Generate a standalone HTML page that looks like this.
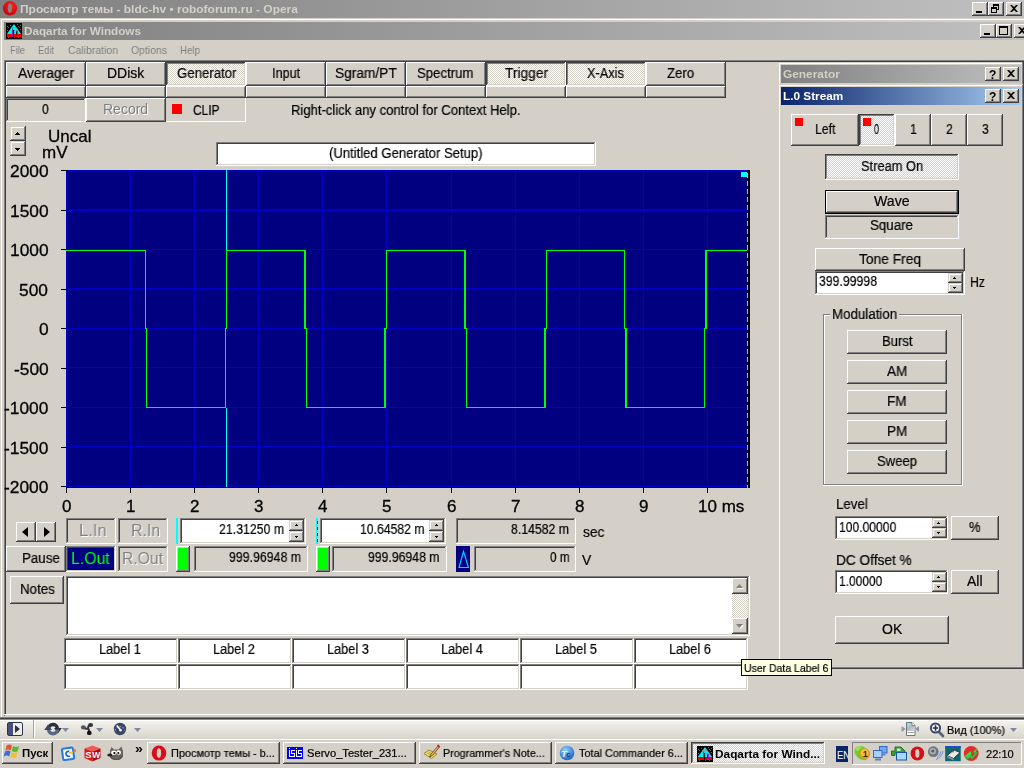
<!DOCTYPE html><html><head><meta charset="utf-8"><title>Daqarta</title><style>
html,body{margin:0;padding:0;}
body{width:1024px;height:768px;overflow:hidden;background:#d4d0c8;position:relative;font-family:"Liberation Sans",sans-serif;font-size:14px;color:#000;}
.a{position:absolute;box-sizing:border-box;white-space:nowrap;overflow:hidden;}
.v{overflow:visible;}
.btn{background:#d4d0c8;box-shadow:inset -1px -1px 0 #404040,inset 1px 1px 0 #fff,inset -2px -2px 0 #808080,inset 2px 2px 0 #d4d0c8;}
.sbtn{background:#d4d0c8;box-shadow:inset -1px -1px 0 #404040,inset 1px 1px 0 #d4d0c8,inset -2px -2px 0 #808080,inset 2px 2px 0 #fff;}
.sunk{background:#d4d0c8;box-shadow:inset -1px -1px 0 #fff,inset 1px 1px 0 #808080,inset -2px -2px 0 #d4d0c8,inset 2px 2px 0 #404040;}
.white{background:#fff;}
.g{will-change:transform;}
.dith{background:repeating-conic-gradient(#fff 0% 25%,#d4d0c8 0% 50%) 0 0/2px 2px;}
.pressed{box-shadow:inset -1px -1px 0 #fff,inset 1px 1px 0 #404040,inset -2px -2px 0 #d4d0c8,inset 2px 2px 0 #808080;}
</style></head><body>
<div class="a " style="left:0px;top:0px;width:1024px;height:18px;background:linear-gradient(90deg,#808080 0%,#c0c0c0 100%);"></div>
<svg class="a v" style="left:2px;top:0px" width="16" height="17" viewBox="0 0 16 17"><defs><radialGradient id="og" cx="0.6" cy="0.3" r="0.8"><stop offset="0" stop-color="#ff2020"/><stop offset="1" stop-color="#c00008"/></radialGradient></defs><ellipse cx="8" cy="8.300" rx="7" ry="7.300" fill="url(#og)"/><ellipse cx="7.900" cy="8.200" rx="2.100" ry="4.600" fill="#848484"/></svg>
<div class="a v g" style="left:20.00px;top:-1px;height:20px;line-height:20px;font-size:11px;color:#d4d0c8;font-weight:bold;transform:scaleX(1.0859);transform-origin:0 0;">Просмотр темы - bldc-hv • roboforum.ru - Opera</div>
<div class="a btn" style="left:972px;top:2px;width:16px;height:14px;"></div>
<div class="a " style="left:976px;top:11px;width:6px;height:2px;background:#000"></div>
<div class="a btn" style="left:988px;top:2px;width:16px;height:14px;"></div>
<div class="a " style="left:993px;top:4px;width:6px;height:6px;border:1px solid #000;border-top:2px solid #000"></div>
<div class="a " style="left:991px;top:7px;width:6px;height:6px;border:1px solid #000;border-top:2px solid #000;background:#d4d0c8"></div>
<div class="a btn" style="left:1006px;top:2px;width:16px;height:14px;"></div>
<svg class="a v" style="left:1010px;top:5px" width="8" height="7" viewBox="0 0 8 7"><path d="M0 0h2l2 2 2-2h2L5 3.5 8 7H6L4 5 2 7H0l3-3.5z" fill="#000"/></svg>
<div class="a " style="left:0px;top:18px;width:1024px;height:701px;background:#d4d0c8"></div>
<div class="a " style="left:1px;top:19px;width:1023px;height:1px;background:#fff"></div>
<div class="a " style="left:1px;top:19px;width:1px;height:698px;background:#fff"></div>
<div class="a " style="left:4px;top:22px;width:1020px;height:18px;background:linear-gradient(90deg,#808080 0%,#c0c0c0 100%);"></div>
<svg class="a v" style="left:6px;top:23px" width="16" height="16" viewBox="0 0 16 16"><rect width="16" height="16" fill="#000"/><path d="M7.900 1L0.800 11h14.400z" fill="#00f0f0"/><rect x="1" y="11" width="14" height="3" fill="#f00000"/><rect x="5" y="4" width="5.500" height="0.700" fill="#a08888"/><rect x="8.500" y="7" width="4" height="0.700" fill="#a08888"/><rect x="6.200" y="5.500" width="1" height="8.500" fill="#9000c0"/><rect x="7.200" y="7" width="0.900" height="7" fill="#100010"/><rect x="11" y="8" width="0.900" height="6" fill="#c000e0"/><rect x="10.100" y="8.500" width="0.900" height="3" fill="#101010"/><rect x="10" y="7.700" width="0.800" height="1.200" fill="#f00000"/><g fill="#686868"><rect x="1" y="3" width="1" height="1"/><rect x="2" y="4" width="1" height="1"/><rect x="4" y="2" width="1" height="1"/><rect x="11" y="1" width="1" height="1"/><rect x="12" y="3" width="1" height="1"/><rect x="13" y="4" width="1" height="1"/><rect x="14" y="2" width="1" height="1"/><rect x="14" y="6" width="1" height="1"/><rect x="1" y="7" width="1" height="1"/></g><g fill="#008080"><rect x="2" y="14" width="1" height="1"/><rect x="8" y="14" width="1" height="1"/><rect x="12" y="14" width="1" height="1"/></g></svg>
<div class="a v g" style="left:24.00px;top:21px;height:20px;line-height:20px;font-size:11px;color:#d4d0c8;font-weight:bold;transform:scaleX(1.0642);transform-origin:0 0;">Daqarta for Windows</div>
<div class="a btn" style="left:980px;top:24px;width:16px;height:14px;"></div>
<div class="a " style="left:984px;top:33px;width:6px;height:2px;background:#000"></div>
<div class="a btn" style="left:996px;top:24px;width:16px;height:14px;"></div>
<div class="a " style="left:999px;top:26px;width:9px;height:9px;border:1px solid #000;border-top:2px solid #000"></div>
<div class="a btn" style="left:1014px;top:24px;width:16px;height:14px;"></div>
<svg class="a v" style="left:1018px;top:27px" width="8" height="7" viewBox="0 0 8 7"><path d="M0 0h2l2 2 2-2h2L5 3.5 8 7H6L4 5 2 7H0l3-3.5z" fill="#000"/></svg>
<div class="a v g" style="left:10.00px;top:40px;height:20px;line-height:20px;font-size:11px;color:#808080;transform:scaleX(0.8451);transform-origin:0 0;">File</div>
<div class="a v g" style="left:38.00px;top:40px;height:20px;line-height:20px;font-size:11px;color:#808080;transform:scaleX(0.8449);transform-origin:0 0;">Edit</div>
<div class="a v g" style="left:68.00px;top:40px;height:20px;line-height:20px;font-size:11px;color:#808080;transform:scaleX(0.9512);transform-origin:0 0;">Calibration</div>
<div class="a v g" style="left:131.00px;top:40px;height:20px;line-height:20px;font-size:11px;color:#808080;transform:scaleX(0.9489);transform-origin:0 0;">Options</div>
<div class="a v g" style="left:180.00px;top:40px;height:20px;line-height:20px;font-size:11px;color:#808080;transform:scaleX(0.8840);transform-origin:0 0;">Help</div>
<div class="a " style="left:4px;top:60px;width:1020px;height:1px;background:#808080"></div>
<div class="a " style="left:5px;top:61px;width:1019px;height:1px;background:#404040"></div>
<div class="a " style="left:4px;top:60px;width:1px;height:656px;background:#808080"></div>
<div class="a " style="left:5px;top:61px;width:1px;height:654px;background:#404040"></div>
<div class="a btn" style="left:6px;top:62px;width:80px;height:24px;"></div>
<div class="a v g" style="left:18.00px;top:63px;height:20px;line-height:20px;font-size:14px;color:#000;transform:scaleX(0.9901);transform-origin:0 0;-webkit-text-stroke:0.2px #000;">Averager</div>
<div class="a btn" style="left:6px;top:86px;width:80px;height:12px;"></div>
<div class="a btn" style="left:86px;top:62px;width:80px;height:24px;"></div>
<div class="a v g" style="left:107.00px;top:63px;height:20px;line-height:20px;font-size:14px;color:#000;transform:scaleX(0.9900);transform-origin:0 0;-webkit-text-stroke:0.2px #000;">DDisk</div>
<div class="a btn" style="left:86px;top:86px;width:80px;height:12px;"></div>
<div class="a pressed dith" style="left:166px;top:62px;width:80px;height:24px;"></div>
<div class="a v g" style="left:176.50px;top:63px;height:20px;line-height:20px;font-size:14px;color:#000;transform:scaleX(0.9435);transform-origin:0 0;-webkit-text-stroke:0.2px #000;">Generator</div>
<div class="a btn" style="left:166px;top:86px;width:80px;height:12px;"></div>
<div class="a btn" style="left:246px;top:62px;width:80px;height:24px;"></div>
<div class="a v g" style="left:272.30px;top:63px;height:20px;line-height:20px;font-size:14px;color:#000;transform:scaleX(0.9028);transform-origin:0 0;-webkit-text-stroke:0.2px #000;">Input</div>
<div class="a btn" style="left:246px;top:86px;width:80px;height:12px;"></div>
<div class="a btn" style="left:326px;top:62px;width:80px;height:24px;"></div>
<div class="a v g" style="left:335.20px;top:63px;height:20px;line-height:20px;font-size:14px;color:#000;transform:scaleX(0.9810);transform-origin:0 0;-webkit-text-stroke:0.2px #000;">Sgram/PT</div>
<div class="a btn" style="left:326px;top:86px;width:80px;height:12px;"></div>
<div class="a btn" style="left:406px;top:62px;width:80px;height:24px;"></div>
<div class="a v g" style="left:417.20px;top:63px;height:20px;line-height:20px;font-size:14px;color:#000;transform:scaleX(0.9410);transform-origin:0 0;-webkit-text-stroke:0.2px #000;">Spectrum</div>
<div class="a btn" style="left:406px;top:86px;width:80px;height:12px;"></div>
<div class="a pressed dith" style="left:486px;top:62px;width:80px;height:24px;"></div>
<div class="a v g" style="left:505.00px;top:63px;height:20px;line-height:20px;font-size:14px;color:#000;transform:scaleX(0.9815);transform-origin:0 0;-webkit-text-stroke:0.2px #000;">Trigger</div>
<div class="a btn" style="left:486px;top:86px;width:80px;height:12px;"></div>
<div class="a pressed dith" style="left:566px;top:62px;width:80px;height:24px;"></div>
<div class="a v g" style="left:586.60px;top:63px;height:20px;line-height:20px;font-size:14px;color:#000;transform:scaleX(0.9125);transform-origin:0 0;-webkit-text-stroke:0.2px #000;">X-Axis</div>
<div class="a btn" style="left:566px;top:86px;width:80px;height:12px;"></div>
<div class="a btn" style="left:646px;top:62px;width:80px;height:24px;"></div>
<div class="a v g" style="left:667.40px;top:63px;height:20px;line-height:20px;font-size:14px;color:#000;transform:scaleX(0.9440);transform-origin:0 0;-webkit-text-stroke:0.2px #000;">Zero</div>
<div class="a btn" style="left:646px;top:86px;width:80px;height:12px;"></div>
<div class="a sunk" style="left:6px;top:98px;width:80px;height:24px;"></div>
<div class="a v g" style="left:42.06px;top:99px;height:20px;line-height:20px;font-size:14px;color:#000;transform:scaleX(0.8800);transform-origin:0 0;-webkit-text-stroke:0.2px #000;">0</div>
<div class="a btn" style="left:86px;top:98px;width:80px;height:24px;"></div>
<div class="a v g" style="left:103.44px;top:99px;height:20px;line-height:20px;font-size:14px;color:#808080;text-shadow:1px 1px 0 #fff;">Record</div>
<div class="a " style="left:166px;top:98px;width:80px;height:24px;box-shadow:inset -1px -1px 0 #fff;"></div>
<div class="a " style="left:172px;top:104px;width:10px;height:10px;background:#ff0000"></div>
<div class="a v g" style="left:192.50px;top:100px;height:20px;line-height:20px;font-size:14px;color:#000;transform:scaleX(0.8514);transform-origin:0 0;-webkit-text-stroke:0.2px #000;">CLIP</div>
<div class="a v g" style="left:291.00px;top:100px;height:20px;line-height:20px;font-size:14px;color:#000;transform:scaleX(0.9334);transform-origin:0 0;-webkit-text-stroke:0.2px #000;">Right-click any control for Context Help.</div>
<div class="a sbtn" style="left:10px;top:126px;width:16px;height:15px;"></div>
<div class="a sbtn" style="left:10px;top:141px;width:16px;height:15px;"></div>
<div class="a " style="left:17px;top:132px;width:1px;height:1px;background:#000"></div>
<div class="a " style="left:16px;top:133px;width:3px;height:1px;background:#000"></div>
<div class="a " style="left:15px;top:134px;width:5px;height:1px;background:#000"></div>
<div class="a " style="left:15px;top:148px;width:5px;height:1px;background:#000"></div>
<div class="a " style="left:16px;top:149px;width:3px;height:1px;background:#000"></div>
<div class="a " style="left:17px;top:150px;width:1px;height:1px;background:#000"></div>
<div class="a v g" style="left:47.50px;top:127px;height:20px;line-height:20px;font-size:17px;color:#000;-webkit-text-stroke:0.3px #000;">Uncal</div>
<div class="a v g" style="left:41.70px;top:143px;height:20px;line-height:20px;font-size:17px;color:#000;transform:scaleX(0.9922);transform-origin:0 0;-webkit-text-stroke:0.3px #000;">mV</div>
<div class="a sunk white" style="left:216px;top:142px;width:380px;height:24px;"></div>
<div class="a v g" style="left:329.00px;top:143px;height:20px;line-height:20px;font-size:14px;color:#000;transform:scaleX(0.9349);transform-origin:0 0;-webkit-text-stroke:0.2px #000;">(Untitled Generator Setup)</div>
<svg class="a" style="left:66px;top:170px" width="684" height="318" viewBox="0 0 684 318" shape-rendering="crispEdges"><rect width="684" height="318" fill="#000080"/><rect x="0" y="0" width="684" height="1" fill="#0000c8"/><rect x="0" y="0" width="1" height="318" fill="#0000c8"/><rect x="0" y="316" width="684" height="1" fill="#0000c8"/><rect x="64" y="0" width="1" height="317" fill="#0000c8"/><rect x="128" y="0" width="1" height="317" fill="#0000c8"/><rect x="192" y="0" width="1" height="317" fill="#0000c8"/><rect x="256" y="0" width="1" height="317" fill="#0000c8"/><rect x="320" y="0" width="1" height="317" fill="#0000c8"/><rect x="385" y="0" width="1" height="317" fill="#0000c8"/><rect x="449" y="0" width="1" height="317" fill="#0000c8"/><rect x="513" y="0" width="1" height="317" fill="#0000c8"/><rect x="577" y="0" width="1" height="317" fill="#0000c8"/><rect x="641" y="0" width="1" height="317" fill="#0000c8"/><rect x="3" y="39" width="681" height="2" fill="#0000c8"/><rect x="3" y="79" width="681" height="1" fill="#0000c8"/><rect x="3" y="118" width="681" height="2" fill="#0000c8"/><rect x="3" y="158" width="681" height="1" fill="#0000c8"/><rect x="3" y="197" width="681" height="1" fill="#0000c8"/><rect x="3" y="237" width="681" height="1" fill="#0000c8"/><rect x="3" y="276" width="681" height="1" fill="#0000c8"/><rect x="0" y="80" width="80" height="1" fill="#00ff00"/><rect x="79" y="80" width="1" height="79" fill="#00ff00"/><rect x="80" y="158" width="1" height="80" fill="#00ff00"/><rect x="80" y="237" width="80" height="1" fill="#00ff00"/><rect x="159" y="158" width="1" height="80" fill="#00ff00"/><rect x="160" y="80" width="1" height="79" fill="#00ff00"/><rect x="160" y="80" width="80" height="1" fill="#00ff00"/><rect x="238" y="80" width="2" height="79" fill="#00ff00"/><rect x="240" y="158" width="1" height="80" fill="#00ff00"/><rect x="240" y="237" width="80" height="1" fill="#00ff00"/><rect x="318" y="158" width="2" height="80" fill="#00ff00"/><rect x="320" y="80" width="1" height="79" fill="#00ff00"/><rect x="320" y="80" width="80" height="1" fill="#00ff00"/><rect x="398" y="80" width="2" height="79" fill="#00ff00"/><rect x="400" y="158" width="1" height="80" fill="#00ff00"/><rect x="400" y="237" width="80" height="1" fill="#00ff00"/><rect x="478" y="158" width="2" height="80" fill="#00ff00"/><rect x="480" y="80" width="1" height="79" fill="#00ff00"/><rect x="480" y="80" width="79" height="1" fill="#00ff00"/><rect x="558" y="80" width="1" height="79" fill="#00ff00"/><rect x="559" y="158" width="2" height="80" fill="#00ff00"/><rect x="559" y="237" width="80" height="1" fill="#00ff00"/><rect x="638" y="158" width="1" height="80" fill="#00ff00"/><rect x="639" y="80" width="2" height="79" fill="#00ff00"/><rect x="639" y="80" width="42" height="1" fill="#00ff00"/><rect x="160" y="0" width="1" height="80" fill="#00ffff"/><rect x="160" y="238" width="1" height="79" fill="#00ffff"/><rect x="681" y="0" width="3" height="318" fill="#000"/><rect x="0" y="317" width="684" height="1" fill="#000"/><rect x="681" y="3" width="1" height="5" fill="#00ffff"/><rect x="681" y="11" width="1" height="5" fill="#00ffff"/><rect x="681" y="19" width="1" height="5" fill="#00ffff"/><rect x="681" y="27" width="1" height="5" fill="#00ffff"/><rect x="681" y="35" width="1" height="5" fill="#00ffff"/><rect x="681" y="43" width="1" height="5" fill="#00ffff"/><rect x="681" y="51" width="1" height="5" fill="#00ffff"/><rect x="681" y="59" width="1" height="5" fill="#00ffff"/><rect x="681" y="67" width="1" height="5" fill="#00ffff"/><rect x="681" y="75" width="1" height="5" fill="#00ffff"/><rect x="681" y="83" width="1" height="5" fill="#00ffff"/><rect x="681" y="91" width="1" height="5" fill="#00ffff"/><rect x="681" y="99" width="1" height="5" fill="#00ffff"/><rect x="681" y="107" width="1" height="5" fill="#00ffff"/><rect x="681" y="115" width="1" height="5" fill="#00ffff"/><rect x="681" y="123" width="1" height="5" fill="#00ffff"/><rect x="681" y="131" width="1" height="5" fill="#00ffff"/><rect x="681" y="139" width="1" height="5" fill="#00ffff"/><rect x="681" y="147" width="1" height="5" fill="#00ffff"/><rect x="681" y="155" width="1" height="5" fill="#00ffff"/><rect x="681" y="163" width="1" height="5" fill="#00ffff"/><rect x="681" y="171" width="1" height="5" fill="#00ffff"/><rect x="681" y="179" width="1" height="5" fill="#00ffff"/><rect x="681" y="187" width="1" height="5" fill="#00ffff"/><rect x="681" y="195" width="1" height="5" fill="#00ffff"/><rect x="681" y="203" width="1" height="5" fill="#00ffff"/><rect x="681" y="211" width="1" height="5" fill="#00ffff"/><rect x="681" y="219" width="1" height="5" fill="#00ffff"/><rect x="681" y="227" width="1" height="5" fill="#00ffff"/><rect x="681" y="235" width="1" height="5" fill="#00ffff"/><rect x="681" y="243" width="1" height="5" fill="#00ffff"/><rect x="681" y="251" width="1" height="5" fill="#00ffff"/><rect x="681" y="259" width="1" height="5" fill="#00ffff"/><rect x="681" y="267" width="1" height="5" fill="#00ffff"/><rect x="681" y="275" width="1" height="5" fill="#00ffff"/><rect x="681" y="283" width="1" height="5" fill="#00ffff"/><rect x="681" y="291" width="1" height="5" fill="#00ffff"/><rect x="681" y="299" width="1" height="5" fill="#00ffff"/><rect x="681" y="307" width="1" height="5" fill="#00ffff"/><rect x="681" y="315" width="1" height="5" fill="#00ffff"/><rect x="675" y="2" width="6" height="5" fill="#00ffff"/></svg>
<div class="a v g" style="left:9.73px;top:162px;height:20px;line-height:20px;font-size:17px;color:#000;transform:scaleX(1.0200);transform-origin:0 0;-webkit-text-stroke:0.3px #000;">2000</div>
<div class="a " style="left:61px;top:170px;width:5px;height:1px;background:#000"></div>
<div class="a v g" style="left:9.73px;top:202px;height:20px;line-height:20px;font-size:17px;color:#000;transform:scaleX(1.0200);transform-origin:0 0;-webkit-text-stroke:0.3px #000;">1500</div>
<div class="a " style="left:61px;top:210px;width:5px;height:1px;background:#000"></div>
<div class="a v g" style="left:9.73px;top:241px;height:20px;line-height:20px;font-size:17px;color:#000;transform:scaleX(1.0200);transform-origin:0 0;-webkit-text-stroke:0.3px #000;">1000</div>
<div class="a " style="left:61px;top:249px;width:5px;height:1px;background:#000"></div>
<div class="a v g" style="left:19.36px;top:281px;height:20px;line-height:20px;font-size:17px;color:#000;transform:scaleX(1.0200);transform-origin:0 0;-webkit-text-stroke:0.3px #000;">500</div>
<div class="a " style="left:61px;top:289px;width:5px;height:1px;background:#000"></div>
<div class="a v g" style="left:38.67px;top:320px;height:20px;line-height:20px;font-size:17px;color:#000;transform:scaleX(1.0200);transform-origin:0 0;-webkit-text-stroke:0.3px #000;">0</div>
<div class="a " style="left:61px;top:328px;width:5px;height:1px;background:#000"></div>
<div class="a v g" style="left:13.62px;top:360px;height:20px;line-height:20px;font-size:17px;color:#000;transform:scaleX(1.0200);transform-origin:0 0;-webkit-text-stroke:0.3px #000;">-500</div>
<div class="a " style="left:61px;top:368px;width:5px;height:1px;background:#000"></div>
<div class="a v g" style="left:3.93px;top:399px;height:20px;line-height:20px;font-size:17px;color:#000;transform:scaleX(1.0200);transform-origin:0 0;-webkit-text-stroke:0.3px #000;">-1000</div>
<div class="a " style="left:61px;top:407px;width:5px;height:1px;background:#000"></div>
<div class="a v g" style="left:3.93px;top:439px;height:20px;line-height:20px;font-size:17px;color:#000;transform:scaleX(1.0200);transform-origin:0 0;-webkit-text-stroke:0.3px #000;">-1500</div>
<div class="a " style="left:61px;top:447px;width:5px;height:1px;background:#000"></div>
<div class="a v g" style="left:3.93px;top:478px;height:20px;line-height:20px;font-size:17px;color:#000;transform:scaleX(1.0200);transform-origin:0 0;-webkit-text-stroke:0.3px #000;">-2000</div>
<div class="a " style="left:61px;top:486px;width:5px;height:1px;background:#000"></div>
<div class="a " style="left:66px;top:170px;width:2px;height:1px;background:#000"></div>
<div class="a " style="left:66px;top:487px;width:1px;height:6px;background:#000"></div>
<div class="a v g" style="left:61.58px;top:497px;height:20px;line-height:20px;font-size:17px;color:#000;-webkit-text-stroke:0.3px #000;">0</div>
<div class="a " style="left:130px;top:487px;width:1px;height:6px;background:#000"></div>
<div class="a v g" style="left:125.58px;top:497px;height:20px;line-height:20px;font-size:17px;color:#000;-webkit-text-stroke:0.3px #000;">1</div>
<div class="a " style="left:194px;top:487px;width:1px;height:6px;background:#000"></div>
<div class="a v g" style="left:189.58px;top:497px;height:20px;line-height:20px;font-size:17px;color:#000;-webkit-text-stroke:0.3px #000;">2</div>
<div class="a " style="left:258px;top:487px;width:1px;height:6px;background:#000"></div>
<div class="a v g" style="left:253.58px;top:497px;height:20px;line-height:20px;font-size:17px;color:#000;-webkit-text-stroke:0.3px #000;">3</div>
<div class="a " style="left:322px;top:487px;width:1px;height:6px;background:#000"></div>
<div class="a v g" style="left:317.58px;top:497px;height:20px;line-height:20px;font-size:17px;color:#000;-webkit-text-stroke:0.3px #000;">4</div>
<div class="a " style="left:386px;top:487px;width:1px;height:6px;background:#000"></div>
<div class="a v g" style="left:381.58px;top:497px;height:20px;line-height:20px;font-size:17px;color:#000;-webkit-text-stroke:0.3px #000;">5</div>
<div class="a " style="left:451px;top:487px;width:1px;height:6px;background:#000"></div>
<div class="a v g" style="left:446.58px;top:497px;height:20px;line-height:20px;font-size:17px;color:#000;-webkit-text-stroke:0.3px #000;">6</div>
<div class="a " style="left:515px;top:487px;width:1px;height:6px;background:#000"></div>
<div class="a v g" style="left:510.58px;top:497px;height:20px;line-height:20px;font-size:17px;color:#000;-webkit-text-stroke:0.3px #000;">7</div>
<div class="a " style="left:579px;top:487px;width:1px;height:6px;background:#000"></div>
<div class="a v g" style="left:574.58px;top:497px;height:20px;line-height:20px;font-size:17px;color:#000;-webkit-text-stroke:0.3px #000;">8</div>
<div class="a " style="left:643px;top:487px;width:1px;height:6px;background:#000"></div>
<div class="a v g" style="left:638.58px;top:497px;height:20px;line-height:20px;font-size:17px;color:#000;-webkit-text-stroke:0.3px #000;">9</div>
<div class="a " style="left:707px;top:487px;width:1px;height:6px;background:#000"></div>
<div class="a v g" style="left:697.50px;top:497px;height:20px;line-height:20px;font-size:17px;color:#000;-webkit-text-stroke:0.3px #000;">10 ms</div>
<div class="a btn" style="left:16px;top:522px;width:20px;height:20px;"></div>
<div class="a btn" style="left:36px;top:522px;width:20px;height:20px;"></div>
<svg class="a v" style="left:22px;top:527px" width="6" height="10" viewBox="0 0 6 10"><path d="M6 0v10L0 5z" fill="#000"/></svg>
<svg class="a v" style="left:44px;top:527px" width="6" height="10" viewBox="0 0 6 10"><path d="M0 0v10L6 5z" fill="#000"/></svg>
<div class="a sunk" style="left:66px;top:518px;width:50px;height:26px;"></div>
<div class="a v g" style="left:79.40px;top:521px;height:20px;line-height:20px;font-size:17px;color:#808080;transform:scaleX(0.9727);transform-origin:0 0;text-shadow:1px 1px 0 #fff;">L.In</div>
<div class="a sunk" style="left:118px;top:518px;width:50px;height:26px;"></div>
<div class="a v g" style="left:130.60px;top:521px;height:20px;line-height:20px;font-size:17px;color:#808080;transform:scaleX(0.9363);transform-origin:0 0;text-shadow:1px 1px 0 #fff;">R.In</div>
<div class="a btn" style="left:6px;top:546px;width:60px;height:26px;"></div>
<div class="a v g" style="left:21.50px;top:548px;height:20px;line-height:20px;font-size:14px;color:#000;transform:scaleX(0.9524);transform-origin:0 0;-webkit-text-stroke:0.2px #000;">Pause</div>
<div class="a sunk" style="left:66px;top:546px;width:50px;height:26px;background:#000080"></div>
<div class="a v g" style="left:71.30px;top:549px;height:20px;line-height:20px;font-size:17px;color:#00ff00;transform:scaleX(0.9311);transform-origin:0 0;">L.Out</div>
<div class="a sunk" style="left:118px;top:546px;width:50px;height:26px;"></div>
<div class="a v g" style="left:122.40px;top:549px;height:20px;line-height:20px;font-size:17px;color:#808080;transform:scaleX(0.9217);transform-origin:0 0;text-shadow:1px 1px 0 #fff;">R.Out</div>
<div class="a " style="left:176px;top:518px;width:2px;height:26px;background:#00ffff"></div>
<div class="a sunk white" style="left:180px;top:518px;width:126px;height:26px;"></div>
<div class="a v g" style="left:219.00px;top:519px;height:20px;line-height:20px;font-size:14px;color:#000;transform:scaleX(0.8818);transform-origin:0 0;-webkit-text-stroke:0.2px #000;">21.31250 m</div>
<div class="a sbtn" style="left:289px;top:520px;width:15px;height:11px;"></div>
<div class="a sbtn" style="left:289px;top:531px;width:15px;height:11px;"></div>
<div class="a " style="left:296px;top:524px;width:1px;height:1px;background:#000"></div>
<div class="a " style="left:295px;top:525px;width:3px;height:1px;background:#000"></div>
<div class="a " style="left:295px;top:536px;width:3px;height:1px;background:#000"></div>
<div class="a " style="left:296px;top:537px;width:1px;height:1px;background:#000"></div>
<div class="a " style="left:316px;top:518px;width:2px;height:26px;background:repeating-linear-gradient(180deg,#00ffff 0 3px,#000080 3px 6px)"></div>
<div class="a " style="left:316px;top:518px;width:1px;height:26px;background:#00ffff"></div>
<div class="a sunk white" style="left:320px;top:518px;width:126px;height:26px;"></div>
<div class="a v g" style="left:360.00px;top:519px;height:20px;line-height:20px;font-size:14px;color:#000;transform:scaleX(0.8724);transform-origin:0 0;-webkit-text-stroke:0.2px #000;">10.64582 m</div>
<div class="a sbtn" style="left:429px;top:520px;width:15px;height:11px;"></div>
<div class="a sbtn" style="left:429px;top:531px;width:15px;height:11px;"></div>
<div class="a " style="left:436px;top:524px;width:1px;height:1px;background:#000"></div>
<div class="a " style="left:435px;top:525px;width:3px;height:1px;background:#000"></div>
<div class="a " style="left:435px;top:536px;width:3px;height:1px;background:#000"></div>
<div class="a " style="left:436px;top:537px;width:1px;height:1px;background:#000"></div>
<div class="a sunk" style="left:456px;top:518px;width:120px;height:26px;"></div>
<div class="a v g" style="left:511.30px;top:519px;height:20px;line-height:20px;font-size:14px;color:#000;transform:scaleX(0.8763);transform-origin:0 0;-webkit-text-stroke:0.2px #000;">8.14582 m</div>
<div class="a v g" style="left:582.60px;top:522px;height:20px;line-height:20px;font-size:14px;color:#000;transform:scaleX(0.9811);transform-origin:0 0;-webkit-text-stroke:0.2px #000;">sec</div>
<div class="a btn" style="left:176px;top:546px;width:14px;height:26px;"></div>
<div class="a " style="left:178px;top:548px;width:10px;height:22px;background:#00ff00"></div>
<div class="a sunk" style="left:194px;top:546px;width:114px;height:26px;"></div>
<div class="a v g" style="left:229.40px;top:547px;height:20px;line-height:20px;font-size:14px;color:#000;transform:scaleX(0.8820);transform-origin:0 0;-webkit-text-stroke:0.2px #000;">999.96948 m</div>
<div class="a btn" style="left:316px;top:546px;width:14px;height:26px;"></div>
<div class="a " style="left:318px;top:548px;width:10px;height:22px;background:#00ff00"></div>
<div class="a sunk" style="left:332px;top:546px;width:115px;height:26px;"></div>
<div class="a v g" style="left:367.50px;top:547px;height:20px;line-height:20px;font-size:14px;color:#000;transform:scaleX(0.8746);transform-origin:0 0;-webkit-text-stroke:0.2px #000;">999.96948 m</div>
<div class="a " style="left:456px;top:546px;width:14px;height:26px;background:#000080"></div>
<svg class="a v" style="left:458px;top:550px" width="12" height="19" viewBox="0 0 12 19"><path d="M5.500 1.500L1 17.500h9.500z" fill="none" stroke="#00d8ff" stroke-width="1.100"/></svg>
<div class="a sunk" style="left:474px;top:546px;width:102px;height:26px;"></div>
<div class="a v g" style="left:549.80px;top:547px;height:20px;line-height:20px;font-size:14px;color:#000;transform:scaleX(0.8365);transform-origin:0 0;-webkit-text-stroke:0.2px #000;">0 m</div>
<div class="a v g" style="left:582.20px;top:550px;height:20px;line-height:20px;font-size:14px;color:#000;transform:scaleX(0.9879);transform-origin:0 0;-webkit-text-stroke:0.2px #000;">V</div>
<div class="a btn" style="left:10px;top:576px;width:54px;height:28px;"></div>
<div class="a v g" style="left:19.80px;top:579px;height:20px;line-height:20px;font-size:14px;color:#000;transform:scaleX(0.9545);transform-origin:0 0;-webkit-text-stroke:0.2px #000;">Notes</div>
<div class="a sunk white" style="left:66px;top:576px;width:684px;height:60px;"></div>
<div class="a dith" style="left:732px;top:578px;width:16px;height:56px;"></div>
<div class="a btn" style="left:732px;top:578px;width:16px;height:16px;"></div>
<div class="a btn" style="left:732px;top:618px;width:16px;height:16px;"></div>
<svg class="a v" style="left:736px;top:584px" width="8" height="5" viewBox="0 0 8 5"><path d="M1 5h7L4.500 1z" fill="#fff"/><path d="M0 4h7L3.500 0z" fill="#808080"/></svg>
<svg class="a v" style="left:736px;top:624px" width="8" height="5" viewBox="0 0 8 5"><path d="M1 1h7L4.500 5z" fill="#fff"/><path d="M0 0h7L3.500 4z" fill="#808080"/></svg>
<div class="a sunk white" style="left:64px;top:638px;width:114px;height:26px;"></div>
<div class="a v g" style="left:99.40px;top:639px;height:20px;line-height:20px;font-size:14px;color:#000;transform:scaleX(0.9099);transform-origin:0 0;-webkit-text-stroke:0.2px #000;">Label 1</div>
<div class="a sunk white" style="left:64px;top:664px;width:114px;height:26px;"></div>
<div class="a sunk white" style="left:178px;top:638px;width:114px;height:26px;"></div>
<div class="a v g" style="left:213.40px;top:639px;height:20px;line-height:20px;font-size:14px;color:#000;transform:scaleX(0.9099);transform-origin:0 0;-webkit-text-stroke:0.2px #000;">Label 2</div>
<div class="a sunk white" style="left:178px;top:664px;width:114px;height:26px;"></div>
<div class="a sunk white" style="left:292px;top:638px;width:114px;height:26px;"></div>
<div class="a v g" style="left:327.40px;top:639px;height:20px;line-height:20px;font-size:14px;color:#000;transform:scaleX(0.9099);transform-origin:0 0;-webkit-text-stroke:0.2px #000;">Label 3</div>
<div class="a sunk white" style="left:292px;top:664px;width:114px;height:26px;"></div>
<div class="a sunk white" style="left:406px;top:638px;width:114px;height:26px;"></div>
<div class="a v g" style="left:441.40px;top:639px;height:20px;line-height:20px;font-size:14px;color:#000;transform:scaleX(0.9099);transform-origin:0 0;-webkit-text-stroke:0.2px #000;">Label 4</div>
<div class="a sunk white" style="left:406px;top:664px;width:114px;height:26px;"></div>
<div class="a sunk white" style="left:520px;top:638px;width:114px;height:26px;"></div>
<div class="a v g" style="left:555.40px;top:639px;height:20px;line-height:20px;font-size:14px;color:#000;transform:scaleX(0.9099);transform-origin:0 0;-webkit-text-stroke:0.2px #000;">Label 5</div>
<div class="a sunk white" style="left:520px;top:664px;width:114px;height:26px;"></div>
<div class="a sunk white" style="left:634px;top:638px;width:114px;height:26px;"></div>
<div class="a v g" style="left:669.40px;top:639px;height:20px;line-height:20px;font-size:14px;color:#000;transform:scaleX(0.9099);transform-origin:0 0;-webkit-text-stroke:0.2px #000;">Label 6</div>
<div class="a sunk white" style="left:634px;top:664px;width:114px;height:26px;"></div>
<div class="a " style="left:778px;top:62px;width:246px;height:24px;background:#d4d0c8;box-shadow:inset -1px 0 0 #404040,inset -2px 0 0 #808080,inset 1px 1px 0 #d4d0c8,inset 2px 2px 0 #fff;"></div>
<div class="a " style="left:781px;top:65px;width:240px;height:18px;background:linear-gradient(90deg,#808080 0%,#c0c0c0 100%);"></div>
<div class="a v g" style="left:783.00px;top:64px;height:20px;line-height:20px;font-size:11px;color:#d4d0c8;font-weight:bold;transform:scaleX(1.0806);transform-origin:0 0;">Generator</div>
<div class="a btn" style="left:985px;top:67px;width:16px;height:14px;"></div>
<div class="a v g" style="left:989.34px;top:65px;height:20px;line-height:20px;font-size:12px;color:#000;font-weight:bold;">?</div>
<div class="a btn" style="left:1003px;top:67px;width:16px;height:14px;"></div>
<svg class="a v" style="left:1007px;top:70px" width="8" height="7" viewBox="0 0 8 7"><path d="M0 0h2l2 2 2-2h2L5 3.5 8 7H6L4 5 2 7H0l3-3.5z" fill="#000"/></svg>
<div class="a " style="left:778px;top:84px;width:246px;height:585px;background:#d4d0c8;box-shadow:inset -1px -1px 0 #404040,inset 1px 1px 0 #d4d0c8,inset -2px -2px 0 #808080,inset 2px 2px 0 #fff;"></div>
<div class="a " style="left:781px;top:87px;width:240px;height:18px;background:linear-gradient(90deg,#0a246a 0%,#a6caf0 100%);"></div>
<div class="a v g" style="left:783.00px;top:86px;height:20px;line-height:20px;font-size:11px;color:#fff;font-weight:bold;transform:scaleX(1.0702);transform-origin:0 0;">L.0 Stream</div>
<div class="a btn" style="left:985px;top:89px;width:16px;height:14px;"></div>
<div class="a v g" style="left:989.34px;top:87px;height:20px;line-height:20px;font-size:12px;color:#000;font-weight:bold;">?</div>
<div class="a btn" style="left:1003px;top:89px;width:16px;height:14px;"></div>
<svg class="a v" style="left:1007px;top:92px" width="8" height="7" viewBox="0 0 8 7"><path d="M0 0h2l2 2 2-2h2L5 3.5 8 7H6L4 5 2 7H0l3-3.5z" fill="#000"/></svg>
<div class="a btn" style="left:791px;top:114px;width:68px;height:32px;"></div>
<div class="a " style="left:795px;top:118px;width:8px;height:8px;background:#ff0000"></div>
<div class="a v g" style="left:814.50px;top:119px;height:20px;line-height:20px;font-size:14px;color:#000;transform:scaleX(0.8770);transform-origin:0 0;-webkit-text-stroke:0.2px #000;">Left</div>
<div class="a pressed dith" style="left:859px;top:114px;width:36px;height:32px;"></div>
<div class="a " style="left:863px;top:118px;width:8px;height:8px;background:#ff0000"></div>
<div class="a v g" style="left:874.00px;top:119px;height:20px;line-height:20px;font-size:14px;color:#000;transform:scaleX(0.6400);transform-origin:0 0;-webkit-text-stroke:0.2px #000;">0</div>
<div class="a btn" style="left:895px;top:114px;width:36px;height:32px;"></div>
<div class="a v g" style="left:909.56px;top:119px;height:20px;line-height:20px;font-size:14px;color:#000;transform:scaleX(0.8800);transform-origin:0 0;-webkit-text-stroke:0.2px #000;">1</div>
<div class="a btn" style="left:931px;top:114px;width:36px;height:32px;"></div>
<div class="a v g" style="left:945.56px;top:119px;height:20px;line-height:20px;font-size:14px;color:#000;transform:scaleX(0.8800);transform-origin:0 0;-webkit-text-stroke:0.2px #000;">2</div>
<div class="a btn" style="left:967px;top:114px;width:36px;height:32px;"></div>
<div class="a v g" style="left:981.56px;top:119px;height:20px;line-height:20px;font-size:14px;color:#000;transform:scaleX(0.8800);transform-origin:0 0;-webkit-text-stroke:0.2px #000;">3</div>
<div class="a pressed dith" style="left:825px;top:154px;width:134px;height:26px;"></div>
<div class="a v g" style="left:860.50px;top:156px;height:20px;line-height:20px;font-size:14px;color:#000;transform:scaleX(0.9175);transform-origin:0 0;-webkit-text-stroke:0.2px #000;">Stream On</div>
<div class="a " style="left:825px;top:190px;width:134px;height:24px;background:#000"></div>
<div class="a btn" style="left:826px;top:191px;width:132px;height:22px;"></div>
<div class="a v g" style="left:873.80px;top:191px;height:20px;line-height:20px;font-size:14px;color:#000;transform:scaleX(1.0099);transform-origin:0 0;-webkit-text-stroke:0.2px #000;">Wave</div>
<div class="a sunk" style="left:825px;top:215px;width:134px;height:24px;"></div>
<div class="a v g" style="left:870.30px;top:215px;height:20px;line-height:20px;font-size:14px;color:#000;transform:scaleX(0.9529);transform-origin:0 0;-webkit-text-stroke:0.2px #000;">Square</div>
<div class="a btn" style="left:815px;top:248px;width:150px;height:23px;"></div>
<div class="a v g" style="left:858.60px;top:249px;height:20px;line-height:20px;font-size:14px;color:#000;transform:scaleX(0.9847);transform-origin:0 0;-webkit-text-stroke:0.2px #000;">Tone Freq</div>
<div class="a sunk white" style="left:815px;top:271px;width:150px;height:24px;"></div>
<div class="a v g" style="left:818.50px;top:271px;height:20px;line-height:20px;font-size:14px;color:#000;transform:scaleX(0.8763);transform-origin:0 0;-webkit-text-stroke:0.2px #000;">399.99998</div>
<div class="a sbtn" style="left:948px;top:273px;width:15px;height:10px;"></div>
<div class="a sbtn" style="left:948px;top:283px;width:15px;height:10px;"></div>
<div class="a " style="left:954px;top:277px;width:1px;height:1px;background:#000"></div>
<div class="a " style="left:953px;top:278px;width:3px;height:1px;background:#000"></div>
<div class="a " style="left:953px;top:287px;width:3px;height:1px;background:#000"></div>
<div class="a " style="left:954px;top:288px;width:1px;height:1px;background:#000"></div>
<div class="a v g" style="left:969.50px;top:272px;height:20px;line-height:20px;font-size:14px;color:#000;transform:scaleX(0.8759);transform-origin:0 0;-webkit-text-stroke:0.2px #000;">Hz</div>
<div class="a " style="left:823px;top:314px;width:140px;height:172px;border:1px solid #fff;"></div>
<div class="a " style="left:823px;top:314px;width:139px;height:171px;border:1px solid #808080;box-shadow:inset 1px 1px 0 #fff;"></div>
<div class="a " style="left:830px;top:305px;width:69px;height:18px;background:#d4d0c8"></div>
<div class="a v g" style="left:832.20px;top:304px;height:20px;line-height:20px;font-size:14px;color:#000;transform:scaleX(0.9504);transform-origin:0 0;-webkit-text-stroke:0.2px #000;">Modulation</div>
<div class="a btn" style="left:847px;top:330px;width:100px;height:24px;"></div>
<div class="a v g" style="left:881.73px;top:331px;height:20px;line-height:20px;font-size:14px;color:#000;transform:scaleX(0.9340);transform-origin:0 0;-webkit-text-stroke:0.2px #000;">Burst</div>
<div class="a btn" style="left:847px;top:360px;width:100px;height:24px;"></div>
<div class="a v g" style="left:886.82px;top:361px;height:20px;line-height:20px;font-size:14px;color:#000;transform:scaleX(0.9700);transform-origin:0 0;-webkit-text-stroke:0.2px #000;">AM</div>
<div class="a btn" style="left:847px;top:390px;width:100px;height:24px;"></div>
<div class="a v g" style="left:887.21px;top:391px;height:20px;line-height:20px;font-size:14px;color:#000;transform:scaleX(0.9700);transform-origin:0 0;-webkit-text-stroke:0.2px #000;">FM</div>
<div class="a btn" style="left:847px;top:420px;width:100px;height:24px;"></div>
<div class="a v g" style="left:886.82px;top:421px;height:20px;line-height:20px;font-size:14px;color:#000;transform:scaleX(0.9700);transform-origin:0 0;-webkit-text-stroke:0.2px #000;">PM</div>
<div class="a btn" style="left:847px;top:450px;width:100px;height:24px;"></div>
<div class="a v g" style="left:877.01px;top:451px;height:20px;line-height:20px;font-size:14px;color:#000;transform:scaleX(0.9340);transform-origin:0 0;-webkit-text-stroke:0.2px #000;">Sweep</div>
<div class="a v g" style="left:835.50px;top:494px;height:20px;line-height:20px;font-size:14px;color:#000;transform:scaleX(0.9522);transform-origin:0 0;-webkit-text-stroke:0.2px #000;">Level</div>
<div class="a sunk white" style="left:835px;top:516px;width:113px;height:24px;"></div>
<div class="a v g" style="left:838.70px;top:517px;height:20px;line-height:20px;font-size:14px;color:#000;transform:scaleX(0.8657);transform-origin:0 0;-webkit-text-stroke:0.2px #000;">100.00000</div>
<div class="a sbtn" style="left:932px;top:518px;width:15px;height:10px;"></div>
<div class="a sbtn" style="left:932px;top:528px;width:15px;height:10px;"></div>
<div class="a " style="left:938px;top:522px;width:1px;height:1px;background:#000"></div>
<div class="a " style="left:937px;top:523px;width:3px;height:1px;background:#000"></div>
<div class="a " style="left:937px;top:532px;width:3px;height:1px;background:#000"></div>
<div class="a " style="left:938px;top:533px;width:1px;height:1px;background:#000"></div>
<div class="a btn" style="left:951px;top:516px;width:48px;height:24px;"></div>
<div class="a v g" style="left:969.19px;top:517px;height:20px;line-height:20px;font-size:14px;color:#000;transform:scaleX(0.9340);transform-origin:0 0;-webkit-text-stroke:0.2px #000;">%</div>
<div class="a v g" style="left:835.50px;top:550px;height:20px;line-height:20px;font-size:14px;color:#000;transform:scaleX(0.9773);transform-origin:0 0;-webkit-text-stroke:0.2px #000;">DC Offset %</div>
<div class="a sunk white" style="left:835px;top:570px;width:113px;height:24px;"></div>
<div class="a v g" style="left:838.70px;top:571px;height:20px;line-height:20px;font-size:14px;color:#000;transform:scaleX(0.8553);transform-origin:0 0;-webkit-text-stroke:0.2px #000;">1.00000</div>
<div class="a sbtn" style="left:932px;top:572px;width:15px;height:10px;"></div>
<div class="a sbtn" style="left:932px;top:582px;width:15px;height:10px;"></div>
<div class="a " style="left:938px;top:576px;width:1px;height:1px;background:#000"></div>
<div class="a " style="left:937px;top:577px;width:3px;height:1px;background:#000"></div>
<div class="a " style="left:937px;top:586px;width:3px;height:1px;background:#000"></div>
<div class="a " style="left:938px;top:587px;width:1px;height:1px;background:#000"></div>
<div class="a btn" style="left:951px;top:570px;width:48px;height:24px;"></div>
<div class="a v g" style="left:967.22px;top:571px;height:20px;line-height:20px;font-size:14px;color:#000;-webkit-text-stroke:0.2px #000;">All</div>
<div class="a btn" style="left:835px;top:616px;width:114px;height:28px;"></div>
<div class="a v g" style="left:881.88px;top:619px;height:20px;line-height:20px;font-size:14px;color:#000;-webkit-text-stroke:0.2px #000;">OK</div>
<div class="a " style="left:741px;top:659px;width:91px;height:17px;background:#ffffe1;border:1px solid #000;"></div>
<div class="a v g" style="left:743.80px;top:658px;height:20px;line-height:20px;font-size:11px;color:#000;transform:scaleX(0.9517);transform-origin:0 0;-webkit-text-stroke:0.2px #000;">User Data Label 6</div>
<div class="a " style="left:4px;top:714px;width:1020px;height:1px;background:#fff"></div>
<div class="a " style="left:0px;top:717px;width:1024px;height:1px;background:#808080"></div>
<div class="a " style="left:0px;top:718px;width:1024px;height:1px;background:#404040"></div>
<div class="a " style="left:0px;top:719px;width:1024px;height:1px;background:#8c8a86"></div>
<div class="a " style="left:0px;top:720px;width:1024px;height:19px;background:linear-gradient(180deg,#ffffff 0,#ffffff 1px,#f3f1eb 1px,#e6e3dc 50%,#d8d4cb 100%);"></div>
<div class="a " style="left:7px;top:722px;width:16px;height:14px;background:linear-gradient(90deg,#46527c 0 5px,#f2efe6 5px);border:1px solid #2a3458;border-radius:2px"></div>
<svg class="a v" style="left:15px;top:725px" width="5" height="8" viewBox="0 0 5 8"><path d="M0 0v8L5 4z" fill="#2a3050"/></svg>
<div class="a " style="left:33px;top:720px;width:1px;height:18px;background:#a8a49c"></div>
<div class="a " style="left:34px;top:720px;width:1px;height:18px;background:#fff"></div>
<svg class="a v" style="left:44px;top:722px" width="18" height="14" viewBox="0 0 18 14"><path d="M4.600 7A4.300 4.100 0 0 1 13.400 6.500" fill="none" stroke="#2a3040" stroke-width="3.400"/><path d="M10 6h7.800L14 11.600z" fill="#2a3040"/><path d="M13.400 7.500A4.300 4.100 0 0 1 4.600 7.500" fill="none" stroke="#5a6682" stroke-width="3.400"/><path d="M0.200 8h7.800L4 2.400z" fill="#3a4560"/></svg>
<svg class="a v" style="left:62px;top:728px" width="7" height="4" viewBox="0 0 7 4"><path d="M0 0h7L3.500 4z" fill="#8088a0"/></svg>
<svg class="a v" style="left:80px;top:722px" width="14" height="14" viewBox="0 0 14 14"><path d="M10.500 3.200Q7.500 3.500 8.300 6.500Q9.500 9 9.300 10.700M8.300 6.500Q6 7.500 3.500 5.500" stroke="#30343c" stroke-width="2" fill="none"/><ellipse cx="10.600" cy="3" rx="2.500" ry="2" fill="#30343c"/><ellipse cx="3.400" cy="5.400" rx="2.500" ry="2.100" fill="#50545c"/><ellipse cx="9.300" cy="10.900" rx="2.400" ry="2.200" fill="#101014"/></svg>
<svg class="a v" style="left:96px;top:728px" width="7" height="4" viewBox="0 0 7 4"><path d="M0 0h7L3.500 4z" fill="#8088a0"/></svg>
<svg class="a v" style="left:113px;top:722px" width="14" height="14" viewBox="0 0 14 14"><circle cx="7" cy="7" r="6.200" fill="#3a4666"/><path d="M2.300 8.500A4.800 4.800 0 0 1 11.700 8.500" fill="none" stroke="#8c98b8" stroke-width="1.200" stroke-dasharray="1.500 1.500"/><path d="M8 8.500L3.800 3.600" stroke="#fff" stroke-width="1.600"/><circle cx="7.600" cy="8.200" r="1.300" fill="#e8ecf4"/></svg>
<svg class="a v" style="left:134px;top:728px" width="7" height="4" viewBox="0 0 7 4"><path d="M0 0h7L3.500 4z" fill="#8088a0"/></svg>
<svg class="a v" style="left:901px;top:722px" width="18" height="14" viewBox="0 0 18 14"><defs><linearGradient id="pg" x1="0" y1="0" x2="0.600" y2="1"><stop offset="0" stop-color="#90f0f0"/><stop offset="0.600" stop-color="#b0b4b8"/><stop offset="1" stop-color="#d0d0d0"/></linearGradient></defs><path d="M5.500 0.500h5.500l3 3v10h-8.500z" fill="#fbfbfb" stroke="#70747c" stroke-width="1"/><path d="M6 1h5l2.500 3v5H6z" fill="url(#pg)"/><path d="M11 0.500v3h3" fill="#fff" stroke="#70747c" stroke-width="0.800"/><path d="M6.500 10.500h6.500" stroke="#a0a4a8" stroke-width="1"/><path d="M1 4.500v5" stroke="#8494b0" stroke-width="1"/><path d="M1.500 4.500L4.500 7L1.500 9.500z" fill="#8494b0"/><path d="M17.500 4.500v5" stroke="#8494b0" stroke-width="1"/><path d="M17 4.500L14.500 7L17 9.500z" fill="#8494b0"/></svg>
<svg class="a v" style="left:929px;top:721px" width="16" height="16" viewBox="0 0 16 16"><path d="M9.500 10.500L14 15" stroke="#56627e" stroke-width="2.600" stroke-linecap="round"/><circle cx="6.500" cy="7" r="4.600" fill="#fff" stroke="#3a4668" stroke-width="2"/><path d="M3.800 7h5.400M6.500 4.300v5.400" stroke="#2a3040" stroke-width="1.700"/></svg>
<div class="a v g" style="left:947.00px;top:720px;height:20px;line-height:20px;font-size:11px;color:#000;transform:scaleX(0.9925);transform-origin:0 0;-webkit-text-stroke:0.2px #000;">Вид (100%)</div>
<svg class="a v" style="left:1010px;top:728px" width="7" height="4" viewBox="0 0 7 4"><path d="M0 0h7L3.500 4z" fill="#8088a0"/></svg>
<div class="a " style="left:0px;top:739px;width:1024px;height:29px;background:#d4d0c8"></div>
<div class="a " style="left:0px;top:739px;width:1024px;height:1px;background:#fff"></div>
<div class="a btn" style="left:2px;top:742px;width:51px;height:22px;"></div>
<svg class="a v" style="left:4px;top:744px" width="16" height="15" viewBox="0 0 16 15"><path d="M2.500 1.500q3-2 5.500 0l-1.200 5q-2.800-2-5.600 0z" fill="#e8582c"/><path d="M9 2q3 2.200 6 0l-1.200 5q-3 2.200-6 0z" fill="#5cb82c"/><path d="M1 7.500q3-2 5.500 0l-1.200 5q-2.800-2-5.600 0z" fill="#3870d8"/><path d="M7.500 8q3 2.200 6 0l-1.200 5q-3 2.200-6 0z" fill="#f0c030"/></svg>
<div class="a v g" style="left:22.00px;top:743px;height:20px;line-height:20px;font-size:11px;color:#000;font-weight:bold;transform:scaleX(1.0339);transform-origin:0 0;">Пуск</div>
<svg class="a v" style="left:60px;top:745px" width="17" height="17" viewBox="0 0 17 17"><g transform="rotate(-8 8.500 8.500)"><rect x="1.500" y="2" width="13" height="13.500" rx="2.500" fill="#2878e0"/><rect x="3.500" y="4" width="9" height="9.500" rx="1" fill="#f0f6ff"/><path d="M9.500 6.500a2.500 2.500 0 1 0 0 4.500" stroke="#2060c0" stroke-width="1.600" fill="none"/><rect x="9" y="7" width="4" height="2" fill="#f0c030"/></g><circle cx="14.500" cy="5.500" r="1.500" fill="#f07020"/></svg>
<svg class="a v" style="left:84px;top:745px" width="17" height="17" viewBox="0 0 17 17"><path d="M8.500 0.500L16.500 3.500 8.500 6.500 0.500 3.500z" fill="#f05858"/><path d="M0.500 3.500L8.500 6.500V16.500L0.500 13z" fill="#e01414"/><path d="M8.500 6.500L16.500 3.500V13L8.500 16.500z" fill="#b40808"/><text x="1.300" y="13" font-family="Liberation Sans" font-weight="bold" font-size="9.500" fill="#fff">S</text><text x="8.300" y="12.500" font-family="Liberation Sans" font-weight="bold" font-size="8.500" fill="#fff" transform="translate(0 0)">W</text></svg>
<svg class="a v" style="left:107px;top:746px" width="17" height="15" viewBox="0 0 17 15"><path d="M3 4.500L4.500 1 7 3.500h4.500L14.500 0.500 16 5v4q-1.500 5-6.500 5T3 10z" fill="#6a645c"/><path d="M3 10q3 3.500 6.500 3.500T16 9v1q-1.500 4-6.500 4T3 11z" fill="#403a34"/><ellipse cx="6.800" cy="6.800" rx="2.600" ry="2.300" fill="#fff"/><ellipse cx="11.600" cy="6.500" rx="2.400" ry="2.200" fill="#fff"/><circle cx="7.400" cy="7.100" r="1.100" fill="#000"/><circle cx="11.300" cy="6.900" r="1" fill="#000"/><ellipse cx="2.800" cy="9" rx="2.600" ry="1.600" fill="#282420"/></svg>
<div class="a v g" style="left:135.00px;top:739px;height:20px;line-height:20px;font-size:12px;color:#000;font-weight:bold;transform:scaleX(1.1664);transform-origin:0 0;">»</div>
<div class="a btn" style="left:147px;top:742px;width:133px;height:22px;"></div>
<div class="a v g" style="left:170.60px;top:743px;height:20px;line-height:20px;font-size:11px;color:#000;transform:scaleX(0.9907);transform-origin:0 0;-webkit-text-stroke:0.2px #000;">Просмотр темы - b...</div>
<svg class="a v" style="left:151px;top:745px" width="16" height="16" viewBox="0 0 16 16"><ellipse cx="8" cy="8.100" rx="7.300" ry="7.500" fill="#dc0c14"/><ellipse cx="7.900" cy="8" rx="2.200" ry="4.700" fill="#d4d0c8"/></svg>
<div class="a btn" style="left:283px;top:742px;width:133px;height:22px;"></div>
<div class="a v g" style="left:306.80px;top:743px;height:20px;line-height:20px;font-size:11px;color:#000;transform:scaleX(1.0138);transform-origin:0 0;-webkit-text-stroke:0.2px #000;">Servo_Tester_231...</div>
<svg class="a v" style="left:287px;top:747px" width="16" height="12" viewBox="0 0 16 12" shape-rendering="crispEdges"><rect width="16" height="12" fill="#0000ff"/><g fill="#fff"><rect x="2" y="1" width="1" height="1"/><rect x="9" y="1" width="1" height="1"/><rect x="2" y="3" width="1" height="7"/><rect x="2" y="9" width="6" height="1"/><rect x="4" y="3" width="4" height="1"/><rect x="4" y="3" width="1" height="4"/><rect x="4" y="6" width="4" height="1"/><rect x="7" y="6" width="1" height="4"/><rect x="9" y="3" width="1" height="7"/><rect x="9" y="9" width="6" height="1"/><rect x="11" y="3" width="4" height="1"/><rect x="11" y="3" width="1" height="4"/><rect x="11" y="6" width="4" height="1"/><rect x="14" y="6" width="1" height="4"/></g></svg>
<div class="a btn" style="left:419px;top:742px;width:133px;height:22px;"></div>
<div class="a v g" style="left:442.80px;top:743px;height:20px;line-height:20px;font-size:11px;color:#000;transform:scaleX(0.9761);transform-origin:0 0;-webkit-text-stroke:0.2px #000;">Programmer's Note...</div>
<svg class="a v" style="left:423px;top:744px" width="17" height="17" viewBox="0 0 17 17"><path d="M1 9.500L6 6l8 4-5.500 4.500z" fill="#f0e060" stroke="#807020" stroke-width="0.800"/><path d="M4 9l5 2.500M5.500 8l5 2.500" stroke="#a09030" stroke-width="0.700"/><path d="M15.500 1.500L8 10l-1.500 3 3-1.500L16.500 3z" fill="#e8b060" stroke="#604020" stroke-width="0.800"/><path d="M14.500 1l2 2" stroke="#c03030" stroke-width="1.800"/></svg>
<div class="a btn" style="left:555px;top:742px;width:133px;height:22px;"></div>
<div class="a v g" style="left:579.00px;top:743px;height:20px;line-height:20px;font-size:11px;color:#000;transform:scaleX(0.9878);transform-origin:0 0;-webkit-text-stroke:0.2px #000;">Total Commander 6...</div>
<svg class="a v" style="left:559px;top:745px" width="16" height="16" viewBox="0 0 16 16"><defs><radialGradient id="tcg" cx="0.400" cy="0.300" r="0.800"><stop offset="0" stop-color="#90d0ff"/><stop offset="1" stop-color="#1058c0"/></radialGradient></defs><circle cx="8" cy="8" r="7.300" fill="url(#tcg)"/><text x="2.300" y="11.500" font-family="Liberation Sans" font-weight="bold" font-style="italic" font-size="9" fill="#e8ffe8">T</text><text x="7.300" y="12" font-family="Liberation Sans" font-weight="bold" font-size="8" fill="#104080">c</text></svg>
<div class="a pressed dith" style="left:691px;top:742px;width:134px;height:22px;"></div>
<svg class="a v" style="left:697px;top:746px" width="16" height="16" viewBox="0 0 16 16"><rect width="16" height="16" fill="#000"/><path d="M7.900 1L0.800 11h14.400z" fill="#00f0f0"/><rect x="1" y="11" width="14" height="3" fill="#f00000"/><rect x="5" y="4" width="5.500" height="0.700" fill="#a08888"/><rect x="8.500" y="7" width="4" height="0.700" fill="#a08888"/><rect x="6.200" y="5.500" width="1" height="8.500" fill="#9000c0"/><rect x="7.200" y="7" width="0.900" height="7" fill="#100010"/><rect x="11" y="8" width="0.900" height="6" fill="#c000e0"/><rect x="10.100" y="8.500" width="0.900" height="3" fill="#101010"/><rect x="10" y="7.700" width="0.800" height="1.200" fill="#f00000"/><g fill="#686868"><rect x="1" y="3" width="1" height="1"/><rect x="2" y="4" width="1" height="1"/><rect x="4" y="2" width="1" height="1"/><rect x="11" y="1" width="1" height="1"/><rect x="12" y="3" width="1" height="1"/><rect x="13" y="4" width="1" height="1"/><rect x="14" y="2" width="1" height="1"/><rect x="14" y="6" width="1" height="1"/><rect x="1" y="7" width="1" height="1"/></g><g fill="#008080"><rect x="2" y="14" width="1" height="1"/><rect x="8" y="14" width="1" height="1"/><rect x="12" y="14" width="1" height="1"/></g></svg>
<div class="a v g" style="left:715.30px;top:744px;height:20px;line-height:20px;font-size:11px;color:#000;font-weight:bold;transform:scaleX(1.0759);transform-origin:0 0;">Daqarta for Wind...</div>
<div class="a " style="left:836px;top:746px;width:12px;height:16px;background:#0a246a"></div>
<div class="a " style="left:836px;top:746px;width:12px;height:16px;"><div class="a v" style="left:1px;top:0;font-size:11px;line-height:19px;color:#fff;transform:scaleX(0.860);transform-origin:0 0">EN</div></div>
<div class="a " style="left:852px;top:742px;width:170px;height:23px;box-shadow:inset -1px -1px 0 #fff,inset 1px 1px 0 #808080;"></div>
<svg class="a v" style="left:853px;top:742px" width="130" height="23" viewBox="0 0 130 23"><path d="M3 5.500q5-3 9 0l4 3q2 6-3 9.500q-6 1-10-4.500q-3-4 0-8z" fill="#78c828"/><path d="M3 5.500q3-1.500 6-0.500l-4 4q-3 0-2-3.500z" fill="#a0e050"/><circle cx="12" cy="11.600" r="5.200" fill="#f09818"/><circle cx="11.500" cy="10.800" r="3.600" fill="#ffc040"/><text x="9.700" y="15" font-family="Liberation Sans" font-weight="bold" font-size="9" fill="#402000">1</text><rect x="26.500" y="4.500" width="7.500" height="6.500" fill="#70a8f0" stroke="#3868c8"/><rect x="28.500" y="12" width="4" height="1.500" fill="#6080c0"/><rect x="20.500" y="8.500" width="8.500" height="7" fill="#a8d0ff" stroke="#3868c8"/><rect x="22" y="16.500" width="6" height="2" fill="#6080c0"/><path d="M38.500 9h3.500v-4h6l4 4v2h-10v2.500h-3.500z" fill="#38a038" stroke="#186018" stroke-width="0.800"/><rect x="43.500" y="10.500" width="10" height="7.500" fill="#a8d8ff" stroke="#1858a0"/><rect x="44" y="6.500" width="3.500" height="2.500" fill="#d0f0d0"/><ellipse cx="64.400" cy="11.500" rx="6.800" ry="7" fill="#dc0c14"/><ellipse cx="64.300" cy="11.400" rx="2.100" ry="4.400" fill="#d4d0c8"/><circle cx="80.300" cy="9.700" r="5.400" fill="#70767e"/><circle cx="79.800" cy="9.200" r="3.200" fill="#a8aeb6"/><circle cx="79.800" cy="9.200" r="1.400" fill="#585e66"/><path d="M84 15.500q3.500-2 3.800-6M83 17.500q6-2.500 7-8.500" stroke="#7888e0" stroke-width="1" fill="none"/><rect x="92.200" y="4" width="15.500" height="15.200" fill="#0c6870"/><rect x="92.200" y="4" width="15.500" height="2" fill="#2848d0"/><path d="M94 13.500l7-5.500 6 2.500-6.500 6z" fill="#e8e8e8" stroke="#202020" stroke-width="0.800"/><path d="M94 13.500l6.500 3v2l-6.500-3z" fill="#909090"/><circle cx="100" cy="9.500" r="0.900" fill="#e03030"/><circle cx="118.200" cy="11.500" r="7.400" fill="#e02c2c"/><path d="M111.500 14.500l6-5.500 1 2.500 6-6-2.500 6.500-1.500-2.500-5 6z" fill="#30e048"/><path d="M113 17l5-3 1 2 5-5.500" stroke="#28c840" stroke-width="1.600" fill="none"/></svg>
<div class="a v g" style="left:985.70px;top:744px;height:20px;line-height:20px;font-size:11px;color:#000;transform:scaleX(1.0073);transform-origin:0 0;-webkit-text-stroke:0.2px #000;">22:10</div>
</body></html>
